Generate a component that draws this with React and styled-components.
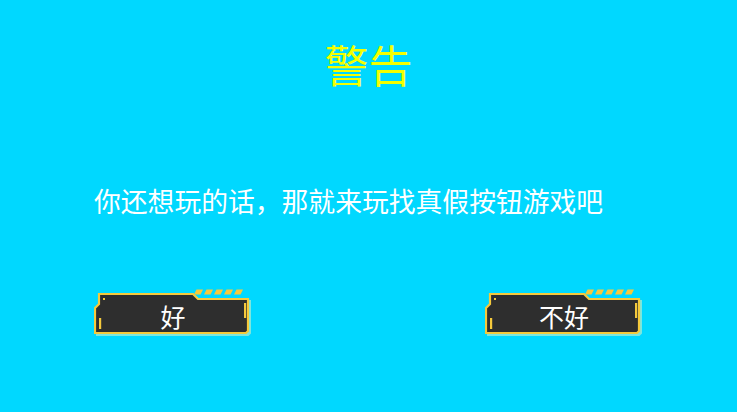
import React from "react";
import styled, { createGlobalStyle } from "styled-components";

const GlobalStyle = createGlobalStyle`
  html, body {
    margin: 0;
    padding: 0;
    background: #00d8ff;
  }
  body {
    font-family: "Noto Sans CJK SC", "Noto Sans", sans-serif;
  }
  #root {
    min-height: 100vh;
  }
`;

const Screen = styled.main`
  width: 100%;
  height: 100vh;
  background: #00d8ff;
  display: flex;
  flex-direction: column;
  box-sizing: border-box;
  padding-top: 42px;
`;

const Title = styled.h1`
  margin: 0;
  font-size: 44px;
  line-height: 44px;
  font-weight: 400;
  color: #f4ff00;
  text-align: center;
`;

const Message = styled.p`
  margin: 101px 0 0;
  padding-left: 94px;
  font-size: 26.8px;
  line-height: 27px;
  color: #ffffff;
  white-space: nowrap;
`;

const Actions = styled.div`
  margin-top: 75px;
  padding: 0 94px;
  display: flex;
  justify-content: space-between;
`;

const FrameButton = styled.button`
  position: relative;
  width: 158px;
  height: 48px;
  padding: 6px 0 0;
  border: none;
  background: transparent;
  display: flex;
  align-items: center;
  justify-content: center;
  cursor: pointer;
  font-family: "Noto Sans CJK SC", sans-serif;
  font-size: 25px;
  line-height: 25px;
  color: #ffffff;
`;

const Frame = styled.svg`
  position: absolute;
  inset: 0;
  width: 158px;
  height: 48px;
  pointer-events: none;
`;

const Label = styled.span`
  position: relative;
`;

const bodyPoints =
  "5,5 99,5 104,10 154,10 154,42 152,44 1,44 1,19 5,15";

// slanted hazard stripes sitting above the raised top edge
const stripes = [0, 1, 2, 3, 4].map((i) => {
  const x = 100 + i * 10;
  return `${x + 2.5},0.5 ${x + 9},0.5 ${x + 6.5},5.5 ${x},5.5`;
});

function ButtonFrame() {
  return (
    <Frame viewBox="0 0 158 48" aria-hidden="true">
      <polygon
        points={bodyPoints}
        transform="translate(2 2)"
        fill="#7ce6de"
        stroke="#7ce6de"
        strokeWidth="2"
      />
      {stripes.map((p) => (
        <polygon key={p} points={p} fill="#f5c93c" />
      ))}
      <polygon
        points={bodyPoints}
        fill="#2e2e2e"
        stroke="#f5c93c"
        strokeWidth="2.2"
      />
      <rect x="9" y="9" width="2" height="2" fill="#f5c93c" />
      <rect x="5" y="29" width="2.2" height="11" fill="#f5c93c" />
      <rect x="150" y="14" width="2.2" height="15" fill="#f5c93c" />
    </Frame>
  );
}

function GameButton({ children }) {
  return (
    <FrameButton type="button">
      <ButtonFrame />
      <Label>{children}</Label>
    </FrameButton>
  );
}

export default function App() {
  return (
    <>
      <GlobalStyle />
      <Screen>
        <Title>警告</Title>
        <Message>你还想玩的话，那就来玩找真假按钮游戏吧</Message>
        <Actions>
          <GameButton>好</GameButton>
          <GameButton>不好</GameButton>
        </Actions>
      </Screen>
    </>
  );
}
